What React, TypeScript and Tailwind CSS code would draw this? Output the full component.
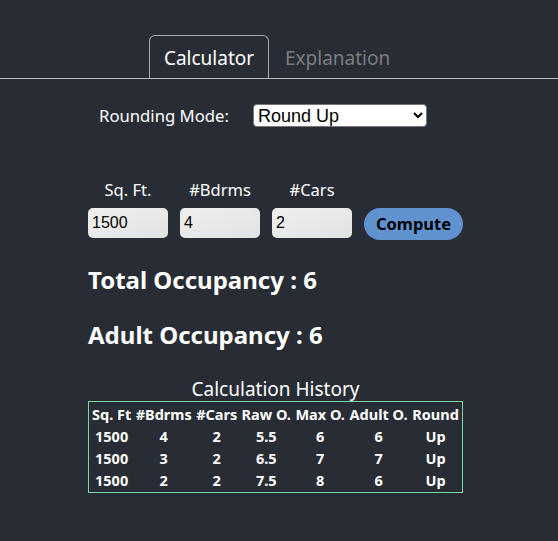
import React from "react"

interface HistoryRow {
  sqft: number
  bdrms: number
  cars: number
  raw: number
  max: number
  adult: number
  round: string
}

const history: HistoryRow[] = [
  { sqft: 1500, bdrms: 4, cars: 2, raw: 5.5, max: 6, adult: 6, round: "Up" },
  { sqft: 1500, bdrms: 3, cars: 2, raw: 6.5, max: 7, adult: 7, round: "Up" },
  { sqft: 1500, bdrms: 2, cars: 2, raw: 7.5, max: 8, adult: 6, round: "Up" },
]

const sans = "font-['Noto_Sans',sans-serif]"
const arial = "font-['Liberation_Sans',Arial,sans-serif]"

const App: React.FC = () => {
  return (
    <div className={`min-h-[541px] w-full bg-[#282c34] text-white ${sans}`}>
      {/* tabs */}
      <div className="pt-[35px] border-b border-[#bbbbbb]">
        <div className="ml-[149px] flex">
          <div className="h-[43px] w-[120px] pt-[3px] flex items-center justify-center rounded-t-[6px] border border-b-0 border-[#aaaaaa] text-[19px]">
            Calculator
          </div>
          <div className="h-[43px] pt-[3px] px-[16px] flex items-center text-[19px] text-[#7b7d80]">Explanation</div>
        </div>
      </div>

      <div className="ml-[88px] w-[375px]">
        <div className="mt-[24px] flex items-center">
          <span className="ml-[11px] text-[16.7px]">Rounding Mode:</span>
          <select
            defaultValue="up"
            className={`ml-[24px] h-[23px] w-[174px] rounded-[4px] border border-[#767676] bg-white pl-0 text-[18px] leading-none text-black ${arial}`}
          >
            <option value="up">Round Up</option>
            <option value="down">Round Down</option>
          </select>
        </div>

        <div className="mt-[52px] flex gap-[12px] items-start">
          {[
            { label: "Sq. Ft.", value: "1500" },
            { label: "#Bdrms", value: "4" },
            { label: "#Cars", value: "2" },
          ].map((f) => (
            <div key={f.label} className="flex flex-col items-center w-[80px]">
              <span className="text-[16.5px] leading-[20px] mb-[8px]">{f.label}</span>
              <input
                defaultValue={f.value}
                className={`h-[30px] w-[80px] rounded-[5px] bg-gradient-to-br from-[#efefef] to-[#e2e2e2] px-[4px] text-[16px] text-black outline-none ${arial}`}
              />
            </div>
          ))}
          <button className="mt-[28px] h-[32px] w-[100px] rounded-full bg-[#6092cf] text-[16.5px] font-bold text-black">
            Compute
          </button>
        </div>

        <h2 className="mt-[24px] text-[24px] font-bold leading-[32px]">Total Occupancy : 6</h2>
        <h2 className="mt-[23px] text-[24px] font-bold leading-[32px]">Adult Occupancy : 6</h2>

        <div className="mt-[26px] text-center text-[19px] leading-[24px]">Calculation History</div>
        <table className="border border-[#7ed6a0] border-separate border-spacing-x-[2px] border-spacing-y-[2.3px] text-[14.5px] font-bold w-[375px]">
          <thead>
            <tr>
              {["Sq. Ft", "#Bdrms", "#Cars", "Raw O.", "Max O.", "Adult O.", "Round"].map((h) => (
                <th key={h} className="px-0 py-0 leading-[20px] whitespace-nowrap">
                  {h}
                </th>
              ))}
            </tr>
          </thead>
          <tbody>
            {history.map((r, i) => (
              <tr key={i}>
                <td className="text-center leading-[20px]">{r.sqft}</td>
                <td className="text-center leading-[20px]">{r.bdrms}</td>
                <td className="text-center leading-[20px]">{r.cars}</td>
                <td className="text-center leading-[20px]">{r.raw}</td>
                <td className="text-center leading-[20px]">{r.max}</td>
                <td className="text-center leading-[20px]">{r.adult}</td>
                <td className="text-center leading-[20px]">{r.round}</td>
              </tr>
            ))}
          </tbody>
        </table>
      </div>
    </div>
  )
}

export default App
